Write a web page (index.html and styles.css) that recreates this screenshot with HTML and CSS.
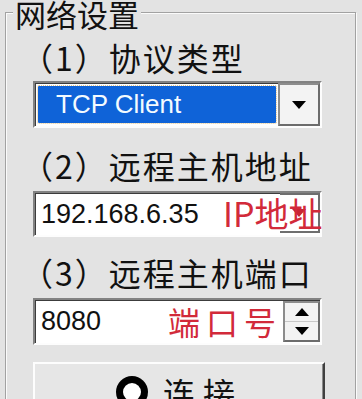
FILE: index.html
```html
<!DOCTYPE html>
<html>
<head>
<meta charset="utf-8">
<link rel="stylesheet" href="styles.css">
</head>
<body>
<div class="group">
  <div class="title">网络设置</div>
  <div class="label l1">（1）协议类型</div>
  <div class="combo">
    <div class="sel">TCP Client</div>
    <div class="dd"><span class="down"></span></div>
  </div>
  <div class="label l2">（2）远程主机地址</div>
  <div class="entry e2">
    <span class="val">192.168.6.35</span>
    <span class="ghost"><span class="down red"></span></span>
    <span class="note n1">IP地址</span>
  </div>
  <div class="label l3">（3）远程主机端口</div>
  <div class="entry e3">
    <span class="val">8080</span>
    <span class="note n2">端口号</span>
    <div class="spin">
      <div class="half"><span class="up"></span></div>
      <div class="half"><span class="down"></span></div>
    </div>
  </div>
  <div class="btn">
    <svg class="icon" width="34" height="34" viewBox="0 0 34 34"><circle cx="17" cy="17" r="16" fill="#000"/><circle cx="17" cy="17" r="9" fill="#fff"/></svg>
    <span class="btxt">连接</span>
  </div>
</div>
</body>
</html>
```

FILE: styles.css
```css
html, body {
  margin: 0;
  padding: 0;
  background: #e3e3e3;
}
body {
  width: 362px;
  height: 399px;
  overflow: hidden;
  font-family: "Noto Sans CJK SC", "Noto Sans", sans-serif;
  color: #111;
}
.group {
  margin: 12px 0 0 5px;
  width: 351px;
  height: 420px;
  box-sizing: border-box;
  border: 1px solid #a2a2a2;
  box-shadow: inset 1px 1px 0 #fbfbfb, 1px 1px 0 #fbfbfb;
  padding-left: 27px;
  display: flex;
  flex-direction: column;
  align-items: flex-start;
}
.title {
  margin: -13px 0 0 -20px;
  background: #e3e3e3;
  padding: 0 2px;
  font-size: 31px;
  line-height: 28px;
  height: 30px;
}
.label {
  margin-left: -12px;
  font-size: 32px;
  line-height: 30px;
  height: 30px;
  letter-spacing: 2px;
  white-space: nowrap;
}
.l1 { margin-top: 12px; }
.l2 { margin-top: 22px; }
.l3 { margin-top: 20px; }
.combo {
  margin-top: 9px;
  width: 289px;
  height: 47px;
  box-sizing: border-box;
  border: 2px solid;
  border-color: #828282 #fdfdfd #fdfdfd #828282;
  box-shadow: inset 1px 1px 0 #3c3c3c;
  background: #fff;
  display: flex;
  gap: 2px;
}
.sel {
  flex: 1;
  margin: 3px 0 3px 3px;
  background: #0f63d8;
  outline: 1px dotted #e2c48c;
  color: #f4fbff;
  font-family: "Liberation Sans", Arial, sans-serif;
  font-size: 26px;
  padding-left: 18px;
  display: flex;
  align-items: center;
  border-radius: 1px;
}
.dd {
  width: 42px;
  box-sizing: border-box;
  border: 2px solid;
  border-color: #8c8c8c #6c6c6c #6c6c6c #8c8c8c;
  background: #f3f3f3;
  display: flex;
  align-items: center;
  justify-content: center;
}
.down {
  width: 0;
  height: 0;
  border-left: 7px solid transparent;
  border-right: 7px solid transparent;
  border-top: 8px solid #000;
}
.up {
  width: 0;
  height: 0;
  border-left: 7px solid transparent;
  border-right: 7px solid transparent;
  border-bottom: 8px solid #000;
}
.down.red { border-top-color: #c82634; }
.entry {
  position: relative;
  width: 289px;
  height: 46px;
  box-sizing: border-box;
  border: 2px solid;
  border-color: #828282 #fdfdfd #fdfdfd #828282;
  box-shadow: inset 1px 1px 0 #3c3c3c;
  background: #fff;
  display: flex;
  align-items: center;
  padding-left: 6px;
  font-family: "Liberation Sans", Arial, sans-serif;
  font-size: 27px;
  color: #111;
}
.e2 { margin-top: 11px; }
.e3 { margin-top: 11px; height: 47px; }
.val { flex: 1; }
.ghost {
  position: absolute;
  right: 0;
  top: 0;
  bottom: 2px;
  width: 40px;
  box-sizing: border-box;
  border: 2px solid #6e6e6e;
  border-left: none;
  display: flex;
  align-items: center;
  justify-content: center;
}
.note {
  position: absolute;
  font-family: "Noto Sans CJK SC", sans-serif;
  color: #d22a3a;
  white-space: nowrap;
}
.n1 {
  left: 188px;
  top: -3px;
  font-size: 34px;
  line-height: 46px;
}
.n2 {
  left: 133px;
  top: 0;
  font-size: 32px;
  line-height: 43px;
  letter-spacing: 6px;
}
.spin {
  align-self: stretch;
  width: 37px;
  box-sizing: border-box;
  margin: 1px 0 1px 0;
  border: 2px solid;
  border-color: #8c8c8c #6c6c6c #6c6c6c #8c8c8c;
  background: #f3f3f3;
  display: flex;
  flex-direction: column;
}
.half {
  flex: 1;
  display: flex;
  align-items: center;
  justify-content: center;
}
.half + .half { border-top: 1px solid #c8c8c8; }
.btn {
  margin-top: 17px;
  width: 292px;
  height: 60px;
  box-sizing: border-box;
  border: 2px solid;
  border-color: #fdfdfd #404040 #404040 #fdfdfd;
  box-shadow: inset -1px -1px 0 #8a8a8a;
  background: #e6e6e6;
  display: flex;
  justify-content: center;
  align-items: flex-start;
  gap: 14px;
  padding-top: 11px;
}
.icon { flex: none; }
.btxt {
  font-size: 32px;
  line-height: 34px;
  letter-spacing: 8px;
}
```
